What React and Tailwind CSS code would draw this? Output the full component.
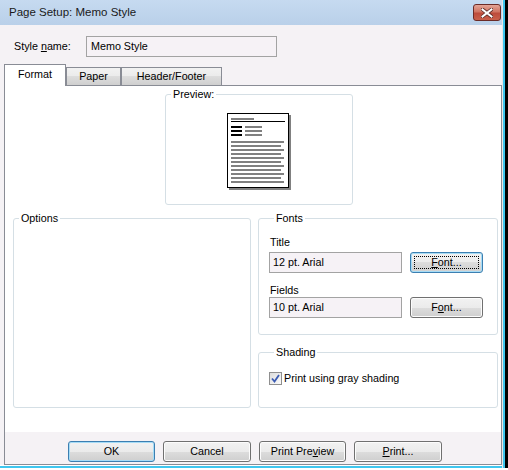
import React from 'react';

const FONT = { fontFamily: '"Liberation Sans", Arial, sans-serif' };

const Btn = ({ children, def, focus, className = '' }) => (
    <button
        className={`relative h-[21px] rounded-[3px] border text-[10.75px] leading-none text-black flex items-center justify-center bg-[linear-gradient(to_bottom,#f2f2f2_0%,#ebebeb_50%,#dddddd_50%,#cfcfcf_100%)] ${def ? 'border-[#3c7fb1] shadow-[inset_0_0_0_1px_#a6dcf6]' : 'border-[#707070] shadow-[inset_0_0_0_1px_#fcfcfc]'} ${className}`}
    >
        {focus && <span className="absolute inset-[3px] border border-dotted border-black" />}
        <span className="relative">{children}</span>
    </button>
);

const Group = ({ label, className = '', children }) => (
    <div className={`border border-[#d5dfe5] rounded-[3px] ${className}`}>
        <span className="block w-fit -mt-[7px] ml-[5px] px-[2px] bg-white text-[10.75px] leading-[13px] text-black">{label}</span>
        {children}
    </div>
);

const Field = ({ value, className = '' }) => (
    <div className={`h-[21px] border border-[#a3a3a3] bg-[#f6f2f6] flex items-center pl-[3px] text-[10.75px] text-black ${className}`}>
        {value}
    </div>
);

const PageIcon = () => {
    const body = [];
    for (let i = 0; i < 11; i++) {
        body.push(<rect key={i} x="4" y={28 + i * 4} width={i % 2 === 0 ? 53 : 50} height="2" fill="#808080" />);
    }
    return (
        <svg width="64" height="77" viewBox="0 0 64 77">
            <rect x="2" y="2" width="62" height="75" fill="#808080" />
            <rect x="0.5" y="0.5" width="61" height="74" fill="#fff" stroke="#000" />
            <rect x="4" y="5" width="23" height="2" fill="#808080" />
            <rect x="4" y="8" width="54" height="1" fill="#000" />
            {[13, 17, 21].map((y) => (
                <g key={y}>
                    <rect x="4" y={y} width="11" height="2" fill="#000" />
                    <rect x="18" y={y} width="17" height="2" fill="#808080" />
                </g>
            ))}
            {body}
        </svg>
    );
};

const Tab = ({ label, active, className = '' }) => (
    <div
        className={`flex items-center justify-center text-[10.75px] text-black border border-[#898c95] border-b-0 ${active
            ? 'h-[22px] bg-white relative z-10'
            : 'h-[18px] mb-px bg-[linear-gradient(to_bottom,#f2f2f2_0%,#ebebeb_50%,#dddddd_50%,#cfcfcf_100%)]'
            } ${className}`}
    >
        {label}
    </div>
);

export default function App() {
    return (
        <div className="w-[508px] h-[470px] bg-white flex" style={FONT}>
            <div className="w-[502px] h-[468px] flex flex-col">
                {/* title bar */}
                <div className="h-[25px] flex items-center justify-between pl-[9px] pr-[1px] bg-[linear-gradient(to_bottom,#c6daf0,#b9d0e9)]">
                    <span className="text-[11.5px] text-[#1a1a1a]">Page Setup: Memo Style</span>
                    <div className="w-[28px] h-[17px] rounded-[3px] border border-[#6b2b27] bg-[linear-gradient(to_bottom,#e4a597_0%,#d07462_45%,#bd4b3b_55%,#c9604b_100%)] flex items-center justify-center">
                        <svg width="12" height="10" viewBox="0 0 12 10">
                            <path d="M1.5 1.5 L10.5 8.5 M10.5 1.5 L1.5 8.5" stroke="#5a2a26" strokeWidth="3.6" strokeLinecap="square" />
                            <path d="M1.5 1.5 L10.5 8.5 M10.5 1.5 L1.5 8.5" stroke="#fff" strokeWidth="2" strokeLinecap="square" />
                        </svg>
                    </div>
                </div>

                {/* body */}
                <div className="flex-1 bg-[#f5f2f5] flex flex-col">
                    <div className="flex items-center mt-[11px] pl-[14px] h-[20px]">
                        <span className="text-[10.75px] text-black w-[72px]">
                            Style <span className="underline">n</span>ame:
                        </span>
                        <Field value="Memo Style" className="w-[191px] h-[20px] pl-[4px]" />
                    </div>

                    <div className="flex items-end mt-[8px] pl-[4px] -mb-px">
                        <Tab label="Format" active className="w-[62px] pb-[2px]" />
                        <Tab label="Paper" className="w-[55px]" />
                        <Tab label="Header/Footer" className="w-[101px]" />
                    </div>

                    <div className="ml-[4px] flex-1 border border-[#898c95] flex flex-col">
                        <div className="flex-1 bg-white flex flex-col">
                            <Group label="Preview:" className="ml-[160px] mt-[8px] w-[188px] h-[111px]">
                                <div className="flex justify-center pt-[12px]">
                                    <PageIcon />
                                </div>
                            </Group>

                            <div className="flex mt-[13px] ml-[8px] gap-[7px]">
                                <Group label="Options" className="w-[238px] h-[190px]" />
                                <div className="w-[240px] flex flex-col gap-[17px]">
                                    <Group label="Fonts" className="h-[117px] pl-[10px]">
                                        <div className="text-[10.75px] leading-[13px] mt-[11px] ml-px text-black">Title</div>
                                        <div className="flex items-center mt-[3px] gap-[8px]">
                                            <Field value="12 pt. Arial" className="w-[133px]" />
                                            <Btn def focus className="w-[73px]">
                                                <span className="underline">F</span>ont...
                                            </Btn>
                                        </div>
                                        <div className="text-[10.75px] leading-[13px] mt-[11px] ml-px text-black">Fields</div>
                                        <div className="flex items-center gap-[8px]">
                                            <Field value="10 pt. Arial" className="w-[133px]" />
                                            <Btn className="w-[73px]">
                                                F<span className="underline">o</span>nt...
                                            </Btn>
                                        </div>
                                    </Group>
                                    <Group label="Shading" className="h-[56px] pl-[10px]">
                                        <div className="flex items-center mt-[11px] gap-[2px]">
                                            <div className="w-[13px] h-[13px] border border-[#8f8f8f] bg-[linear-gradient(135deg,#dcdcdc,#fbfbfb)] flex items-center justify-center">
                                                <svg width="9" height="9" viewBox="0 0 9 9">
                                                    <path d="M1 4.5 L3.5 7.5 L8 1" stroke="#3b5bb3" strokeWidth="1.8" fill="none" />
                                                </svg>
                                            </div>
                                            <span className="text-[10.75px] text-black">
                                                Print using <span className="underline">g</span>ray shading
                                            </span>
                                        </div>
                                    </Group>
                                </div>
                            </div>
                        </div>

                        <div className="h-[32px] bg-[#f5f2f5] flex items-start pt-[9px] pl-[63px] gap-[8px]">
                            <Btn def className="w-[87px]">OK</Btn>
                            <Btn className="w-[88px]">Cancel</Btn>
                            <Btn className="w-[87px]">
                                Print Pre<span className="underline">v</span>iew
                            </Btn>
                            <Btn className="w-[88px]">
                                <span className="underline">P</span>rint...
                            </Btn>
                        </div>
                    </div>
                    <div className="h-px bg-white" />
                    <div className="h-[2px] bg-[#3fc6ef]" />
                </div>
            </div>
            <div className="w-[6px] h-[468px] flex">
                <div className="w-px bg-[#e6e6e6]" />
                <div className="w-[2px] bg-[#3fc6ef]" />
                <div className="w-[3px] bg-black" />
            </div>
        </div>
    );
}
